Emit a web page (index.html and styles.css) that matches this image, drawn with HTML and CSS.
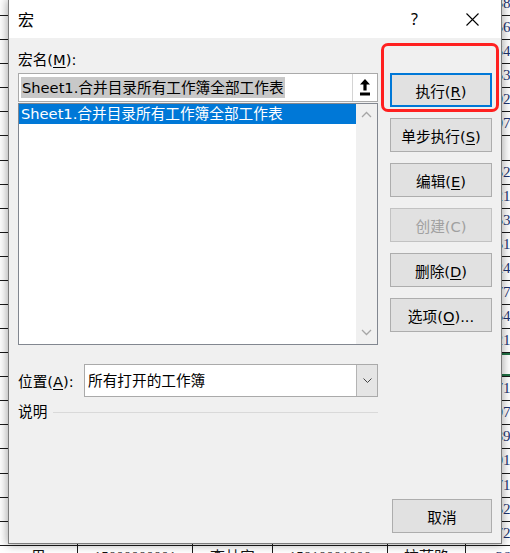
FILE: index.html
```html
<!DOCTYPE html>
<html lang="zh">
<head>
<meta charset="utf-8">
<title>宏</title>
<link rel="stylesheet" href="styles.css">
</head>
<body>
<div class="sheet">
  <div class="row"><div class="cell"></div><div class="cell"></div><div class="cell"></div><div class="cell"></div><div class="cell"></div><div class="cell num">38912345</div></div>
  <div class="row"><div class="cell"></div><div class="cell"></div><div class="cell"></div><div class="cell"></div><div class="cell"></div><div class="cell num">56201934</div></div>
  <div class="row"><div class="cell"></div><div class="cell"></div><div class="cell"></div><div class="cell"></div><div class="cell"></div><div class="cell num">54023817</div></div>
  <div class="row"><div class="cell"></div><div class="cell"></div><div class="cell"></div><div class="cell"></div><div class="cell"></div><div class="cell num">53810246</div></div>
  <div class="row"><div class="cell"></div><div class="cell"></div><div class="cell"></div><div class="cell"></div><div class="cell"></div><div class="cell num">02931745</div></div>
  <div class="row"><div class="cell"></div><div class="cell"></div><div class="cell"></div><div class="cell"></div><div class="cell"></div><div class="cell num">07528163</div></div>
  <div class="row"><div class="cell"></div><div class="cell"></div><div class="cell"></div><div class="cell"></div><div class="cell"></div><div class="cell num"></div></div>
  <div class="row"><div class="cell"></div><div class="cell"></div><div class="cell"></div><div class="cell"></div><div class="cell"></div><div class="cell num">52361048</div></div>
  <div class="row"><div class="cell"></div><div class="cell"></div><div class="cell"></div><div class="cell"></div><div class="cell"></div><div class="cell num">21740359</div></div>
  <div class="row"><div class="cell"></div><div class="cell"></div><div class="cell"></div><div class="cell"></div><div class="cell"></div><div class="cell num">53092817</div></div>
  <div class="row"><div class="cell"></div><div class="cell"></div><div class="cell"></div><div class="cell"></div><div class="cell"></div><div class="cell num">51726304</div></div>
  <div class="row"><div class="cell"></div><div class="cell"></div><div class="cell"></div><div class="cell"></div><div class="cell"></div><div class="cell num">24831076</div></div>
  <div class="row"><div class="cell"></div><div class="cell"></div><div class="cell"></div><div class="cell"></div><div class="cell"></div><div class="cell num">77260518</div></div>
  <div class="row"><div class="cell"></div><div class="cell"></div><div class="cell"></div><div class="cell"></div><div class="cell"></div><div class="cell num">54017293</div></div>
  <div class="row"><div class="cell"></div><div class="cell"></div><div class="cell"></div><div class="cell"></div><div class="cell"></div><div class="cell num">21385607</div></div>
  <div class="row"><div class="cell"></div><div class="cell"></div><div class="cell"></div><div class="cell"></div><div class="cell"></div><div class="cell num active"></div></div>
  <div class="row"><div class="cell"></div><div class="cell"></div><div class="cell"></div><div class="cell"></div><div class="cell"></div><div class="cell num">71620384</div></div>
  <div class="row"><div class="cell"></div><div class="cell"></div><div class="cell"></div><div class="cell"></div><div class="cell"></div><div class="cell num">97142058</div></div>
  <div class="row"><div class="cell"></div><div class="cell"></div><div class="cell"></div><div class="cell"></div><div class="cell"></div><div class="cell num">89503126</div></div>
  <div class="row"><div class="cell"></div><div class="cell"></div><div class="cell"></div><div class="cell"></div><div class="cell"></div><div class="cell num">91274068</div></div>
  <div class="row"><div class="cell"></div><div class="cell"></div><div class="cell"></div><div class="cell"></div><div class="cell"></div><div class="cell num">71836025</div></div>
  <div class="row"><div class="cell"></div><div class="cell"></div><div class="cell"></div><div class="cell"></div><div class="cell"></div><div class="cell num">52609174</div></div>
  <div class="row"><div class="cell"></div><div class="cell"></div><div class="cell"></div><div class="cell"></div><div class="cell"></div><div class="cell num">72315940</div></div>
  <div class="row"><div class="cell center">男</div><div class="cell center">15000000001</div><div class="cell center">李林安</div><div class="cell center">15810001000</div><div class="cell center">拉萨路</div><div class="cell num">36401827</div></div>
</div>

<div class="dialog">
  <div class="titlebar">
    <span class="title">宏</span>
    <span class="help">?</span>
    <span class="close">
      <svg width="13" height="13" viewBox="0 0 13 13"><path d="M0.5 0.5 L12.5 12.5 M12.5 0.5 L0.5 12.5" stroke="#000" stroke-width="1.1" fill="none"/></svg>
    </span>
  </div>
  <div class="content">
    <div class="main">
      <div class="left">
        <div class="label">宏名(<u>M</u>):</div>
        <div class="namebox">
          <span class="sel">Sheet1.合并目录所有工作簿全部工作表</span>
          <span class="upbtn">
            <svg width="10" height="17" viewBox="0 0 10 17"><path d="M5 0 L10 5.5 H6.6 V11.5 H3.4 V5.5 H0 Z" fill="#000"/><rect x="0" y="13.5" width="10" height="3" fill="#000"/></svg>
          </span>
        </div>
        <div class="list">
          <div class="items">
            <div class="item">Sheet1.合并目录所有工作簿全部工作表</div>
          </div>
          <div class="scroll">
            <svg width="11" height="7" viewBox="0 0 11 7"><path d="M1 6 L5.5 1.5 L10 6" stroke="#a6a6a6" stroke-width="1.3" fill="none"/></svg>
            <svg width="11" height="7" viewBox="0 0 11 7"><path d="M1 1 L5.5 5.5 L10 1" stroke="#a6a6a6" stroke-width="1.3" fill="none"/></svg>
          </div>
        </div>
        <div class="loc">
          <span class="loclabel">位置(<u>A</u>):</span>
          <div class="select">
            <span class="seltext">所有打开的工作簿</span>
            <span class="dd">
              <svg width="9" height="5" viewBox="0 0 9 5"><path d="M0.5 0.5 L4.5 4.5 L8.5 0.5" stroke="#444" stroke-width="1" fill="none"/></svg>
            </span>
          </div>
        </div>
        <div class="desc"><span>说明</span><span class="rule"></span></div>
      </div>
      <div class="right">
        <div class="runwrap">
          <button class="btn default">执行(<u>R</u>)</button>
          <span class="highlight"></span>
        </div>
        <button class="btn">单步执行(<u>S</u>)</button>
        <button class="btn">编辑(<u>E</u>)</button>
        <button class="btn disabled">创建(C)</button>
        <button class="btn">删除(<u>D</u>)</button>
        <button class="btn">选项(<u>O</u>)...</button>
      </div>
    </div>
    <div class="footer">
      <button class="btn cancel">取消</button>
    </div>
  </div>
</div>
</body>
</html>
```
FILE: styles.css
```css
* { box-sizing: border-box; }
html, body { margin: 0; padding: 0; }
body {
  width: 510px;
  height: 553px;
  overflow: hidden;
  position: relative;
  background: #fff;
  font-family: "Liberation Serif", "Noto Sans CJK SC", serif;
}

/* background worksheet */
.sheet { margin-top: -8px; width: 510px; overflow: hidden; }
.row {
  display: grid;
  grid-template-columns: 78px 115px 80px 115px 78px 44px;
  height: 24.08px;
  border-bottom: 1px solid #1a1a1a;
}
.cell {
  border-right: 1px solid #1a1a1a;
  font-size: 15px;
  line-height: 23px;
  color: #1d3470;
  white-space: nowrap;
  overflow: hidden;
}
.cell.center { text-align: center; color: #111; }
.row .cell:last-child { border-right: 0; }
.num { padding-left: 29.5px; }
.active { box-shadow: inset 0 2px 0 #217346, inset 0 -2px 0 #217346; }

/* dialog */
.dialog {
  position: absolute;
  left: 8px;
  top: 0;
  width: 494px;
  height: 544px;
  background: #f0f0f0;
  border: 1px solid #7c7c7c;
  border-top: 0;
  box-shadow: 0 0 9px 1px rgba(0, 0, 0, 0.35);
  display: flex;
  flex-direction: column;
  font-family: "DejaVu Sans", "Noto Sans CJK SC", sans-serif;
  font-size: 14.67px;
  color: #000;
}
.titlebar {
  height: 38px;
  background: #fff;
  display: flex;
  align-items: center;
  flex: none;
}
.title {
  padding-left: 9px;
  font-family: "Noto Sans CJK SC", sans-serif;
  font-size: 16px;
}
.help {
  margin-left: auto;
  width: 57px;
  text-align: center;
  font-family: "Noto Sans", sans-serif;
  font-size: 16px;
}
.close {
  width: 58px;
  display: flex;
  justify-content: center;
  align-items: center;
}
.content {
  flex: 1;
  display: flex;
  flex-direction: column;
  padding: 12px 9px 10px 9px;
}
.main { display: flex; gap: 12px; }
.left { width: 360px; display: flex; flex-direction: column; }
.label { height: 20px; line-height: 20px; }
u { text-underline-offset: 2px; }

.namebox {
  margin-top: 3px;
  height: 29px;
  background: #fff;
  border: 1px solid #aaaaaa;
  display: flex;
  align-items: center;
  padding-left: 2px;
}
.sel {
  background: #c8c8c8;
  line-height: 21px;
  padding: 0 1px;
  white-space: nowrap;
}
.upbtn {
  margin-left: auto;
  width: 25px;
  height: 27px;
  border-left: 1px solid #d4d4d4;
  display: flex;
  align-items: center;
  justify-content: center;
}

.list {
  margin-top: 1px;
  height: 242px;
  border: 1px solid #828790;
  background: #fff;
  display: flex;
}
.items { flex: 1; }
.item {
  background: #0078d7;
  color: #fff;
  height: 20px;
  line-height: 20px;
  padding-left: 2px;
  white-space: nowrap;
}
.scroll {
  width: 21px;
  background: #f0f0f0;
  display: flex;
  flex-direction: column;
  justify-content: space-between;
  align-items: center;
  padding: 7px 0 8px;
}

.loc {
  margin-top: 19px;
  height: 33px;
  display: flex;
  align-items: center;
}
.loclabel { width: 66px; white-space: nowrap; }
.select {
  width: 294px;
  height: 33px;
  border: 1px solid #aaaaaa;
  background: #fff;
  display: flex;
}
.seltext { padding-left: 3px; line-height: 31px; }
.dd {
  margin-left: auto;
  width: 21px;
  background: #e5e5e5;
  border-left: 1px solid #b4b4b4;
  display: flex;
  align-items: center;
  justify-content: center;
}
.desc {
  margin-top: 5px;
  display: flex;
  align-items: center;
  gap: 6px;
  line-height: 20px;
}
.rule { flex: 1; height: 1px; background: #d9d9d9; }

.right {
  width: 102px;
  display: flex;
  flex-direction: column;
  gap: 11px;
  padding-top: 23px;
}
.runwrap { position: relative; height: 34px; }
.btn {
  width: 102px;
  height: 34px;
  padding: 0;
  margin: 0;
  background: #e1e1e1;
  border: 1px solid #adadad;
  font: inherit;
  color: #000;
  display: block;
  white-space: nowrap;
}
.btn.default { border: 2px solid #0078d7; }
.btn.disabled { color: #a0a0a0; border-color: #c2c2c2; }
.highlight {
  position: absolute;
  left: -9px;
  top: -30px;
  right: -7px;
  bottom: -5px;
  border: 3px solid #ff2020;
  border-radius: 7px;
}
.footer {
  margin-top: auto;
  display: flex;
  justify-content: flex-end;
}
.btn.cancel { width: 100px; }
```
